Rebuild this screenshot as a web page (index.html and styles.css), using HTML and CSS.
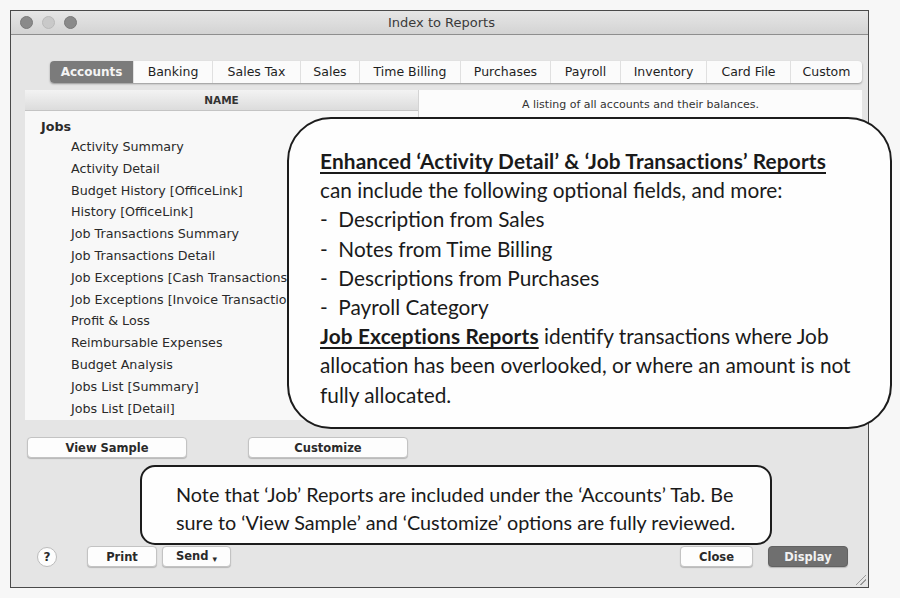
FILE: index.html
```html
<!DOCTYPE html>
<html lang="en">

<head>
    <meta charset="UTF-8">
    <title>Index to Reports</title>
    <link rel="stylesheet" href="styles.css">
</head>

<body>
    <div class="window">
        <div class="titlebar">
            <div class="lights">
                <span class="light"></span>
                <span class="light light-off"></span>
                <span class="light"></span>
            </div>
            <div class="title">Index to Reports</div>
        </div>

        <div class="tabs">
            <div class="tab active">Accounts</div>
            <div class="tab">Banking</div>
            <div class="tab">Sales Tax</div>
            <div class="tab">Sales</div>
            <div class="tab">Time Billing</div>
            <div class="tab">Purchases</div>
            <div class="tab">Payroll</div>
            <div class="tab">Inventory</div>
            <div class="tab">Card File</div>
            <div class="tab">Custom</div>
        </div>

        <div class="panels">
            <div class="list-panel">
                <div class="list-head">NAME</div>
                <ul class="report-list">
                    <li class="group">Jobs</li>
                    <li>Activity Summary</li>
                    <li>Activity Detail</li>
                    <li>Budget History [OfficeLink]</li>
                    <li>History [OfficeLink]</li>
                    <li>Job Transactions Summary</li>
                    <li>Job Transactions Detail</li>
                    <li>Job Exceptions [Cash Transactions]</li>
                    <li>Job Exceptions [Invoice Transactions]</li>
                    <li>Profit &amp; Loss</li>
                    <li>Reimbursable Expenses</li>
                    <li>Budget Analysis</li>
                    <li>Jobs List [Summary]</li>
                    <li>Jobs List [Detail]</li>
                </ul>
            </div>
            <div class="desc-panel">
                <div class="desc">A listing of all accounts and their balances.</div>
            </div>
        </div>

        <div class="actions">
            <button type="button" class="btn btn-sample">View Sample</button>
            <button type="button" class="btn btn-custom">Customize</button>
        </div>

        <div class="footer">
            <span class="help">?</span>
            <button type="button" class="btn btn-print">Print</button>
            <button type="button" class="btn btn-send">Send <span class="caret">&#9662;</span></button>
            <span class="spacer"></span>
            <button type="button" class="btn btn-close">Close</button>
            <button type="button" class="btn btn-display">Display</button>
        </div>

        <div class="grip"></div>
    </div>

    <!-- callouts laid over the screenshot -->
    <div class="callout callout-big">
        <p><b>Enhanced &lsquo;Activity Detail&rsquo; &amp; &lsquo;Job Transactions&rsquo; Reports</b></p>
        <p>can include the following optional fields, and more:</p>
        <p>-&nbsp; Description from Sales</p>
        <p>-&nbsp; Notes from Time Billing</p>
        <p>-&nbsp; Descriptions from Purchases</p>
        <p>-&nbsp; Payroll Category</p>
        <p><b>Job Exceptions Reports</b> identify transactions where Job</p>
        <p>allocation has been overlooked, or where an amount is not</p>
        <p>fully allocated.</p>
    </div>

    <div class="callout callout-note">
        <p>Note that &lsquo;Job&rsquo; Reports are included under the &lsquo;Accounts&rsquo; Tab. Be</p>
        <p>sure to &lsquo;View Sample&rsquo; and &lsquo;Customize&rsquo; options are fully reviewed.</p>
    </div>
</body>

</html>
```

FILE: styles.css
```css
* {
    margin: 0;
    padding: 0;
    box-sizing: border-box;
}

body {
    font-family: 'DejaVu Sans', sans-serif;
    font-size: 12px;
    color: #2a2a2a;
    background: #f7f7f7;
    padding: 10px 0 0 10px;
}

.window {
    position: relative;
    width: 859px;
    height: 578px;
    border: 1px solid #4a4a4a;
    background: #e5e5e5;
    display: flex;
    flex-direction: column;
}

/* title bar */
.titlebar {
    height: 24px;
    display: flex;
    align-items: center;
    background: linear-gradient(#e6e6e6, #d3d3d3);
    border-bottom: 1px solid #8e8e8e;
    position: relative;
}

.lights {
    display: flex;
    gap: 9px;
    padding-left: 9px;
}

.light {
    width: 13px;
    height: 13px;
    border-radius: 50%;
    background: #8a8a8a;
    border: 1px solid #7a7a7a;
}

.light-off {
    background: #c9c9c9;
    border-color: #b9b9b9;
}

.title {
    flex: 1;
    text-align: center;
    margin-left: -62px;
    font-size: 13px;
    color: #3a3a3a;
}

/* tabs */
.tabs {
    display: grid;
    grid-template-columns: 83px 79px 88px 59px 101px 90px 70px 86px 84px 72px;
    margin: 26px 0 0 39px;
    width: 812px;
    height: 22px;
    background: #fbfbfb;
    border-radius: 4px;
    box-shadow: 0 1px 2px rgba(0, 0, 0, 0.35);
}

.tab {
    text-align: center;
    line-height: 22px;
    font-size: 12.5px;
    color: #1e1e1e;
    border-left: 1px solid #e0e0e0;
}

.tab:first-child {
    border-left: none;
}

.tab.active {
    background: #7b7b7b;
    color: #f4f4f4;
    font-weight: bold;
    font-size: 12px;
    border-radius: 4px 0 0 4px;
}

/* list + description */
.panels {
    display: flex;
    margin: 7px 0 0 14px;
    height: 330px;
}

.list-panel {
    width: 393px;
    background: #f8f8f8;
}

.list-head {
    height: 21px;
    line-height: 21px;
    text-align: center;
    font-size: 10.5px;
    font-weight: bold;
    color: #333;
    background: linear-gradient(#f3f3f3, #dcdcdc);
    border-bottom: 1px solid #c4c4c4;
}

.report-list {
    list-style: none;
    padding-top: 6px;
    white-space: nowrap;
    overflow: hidden;
    font-size: 12.7px;
}

.report-list li {
    line-height: 21.8px;
    padding-left: 46px;
}

.report-list .group {
    line-height: 19px;
    padding-left: 16px;
    font-weight: bold;
}

.desc-panel {
    width: 444px;
    background: #fafafa;
    border-left: 1px solid #d4d4d4;
}

.desc {
    height: 27px;
    line-height: 30px;
    text-align: center;
    font-size: 11px;
    color: #333;
    background: #fcfcfc;
}

/* buttons */
.btn {
    font-family: 'DejaVu Sans', sans-serif;
    font-size: 11.5px;
    font-weight: bold;
    color: #2a2a2a;
    height: 21px;
    background: #fdfdfd;
    border: 1px solid #c3c3c3;
    border-radius: 4px;
    box-shadow: 0 1px 1px rgba(0, 0, 0, 0.2);
}

.actions {
    display: flex;
    gap: 61px;
    margin: 17px 0 0 16px;
}

.btn-sample,
.btn-custom {
    width: 160px;
}

.footer {
    margin-top: auto;
    padding: 0 0 20px 26px;
    display: flex;
    align-items: center;
}

.help {
    width: 20px;
    height: 20px;
    border-radius: 50%;
    background: #fdfdfd;
    border: 1px solid #bcbcbc;
    text-align: center;
    line-height: 18px;
    font-weight: bold;
    font-size: 12px;
    margin-right: 30px;
}

.btn-print {
    width: 70px;
    margin-right: 5px;
}

.btn-send {
    width: 69px;
}

.caret {
    font-size: 9px;
    vertical-align: -2px;
}

.spacer {
    flex: 1;
}

.btn-close {
    width: 73px;
    margin-right: 15px;
}

.btn-display {
    width: 80px;
    margin-right: 20px;
    background: #6f6f6f;
    border-color: #626262;
    color: #f2f2f2;
}

.grip {
    position: absolute;
    right: 2px;
    bottom: 2px;
    width: 10px;
    height: 10px;
    background: linear-gradient(135deg, transparent 45%, #999 45%, #999 52%, transparent 52%, transparent 68%, #999 68%, #999 75%, transparent 75%);
}

/* callouts */
.callout {
    position: absolute;
    background: #fefefe;
    border: 2px solid #1c1c1c;
    font-family: 'Lato', 'Open Sans', sans-serif;
    color: #1a1a1a;
}

.callout-big {
    left: 287px;
    top: 117px;
    width: 605px;
    height: 312px;
    border-radius: 44px;
    padding: 27px 0 0 31px;
    font-size: 20.8px;
    line-height: 29.2px;
}

.callout-big b {
    text-decoration: underline;
    text-underline-offset: 3px;
    letter-spacing: 0.15px;
}

.callout-note {
    left: 140px;
    top: 465px;
    width: 632px;
    height: 80px;
    border-radius: 15px;
    padding: 13px 0 0 34px;
    font-size: 19.8px;
    line-height: 28px;
}
```
